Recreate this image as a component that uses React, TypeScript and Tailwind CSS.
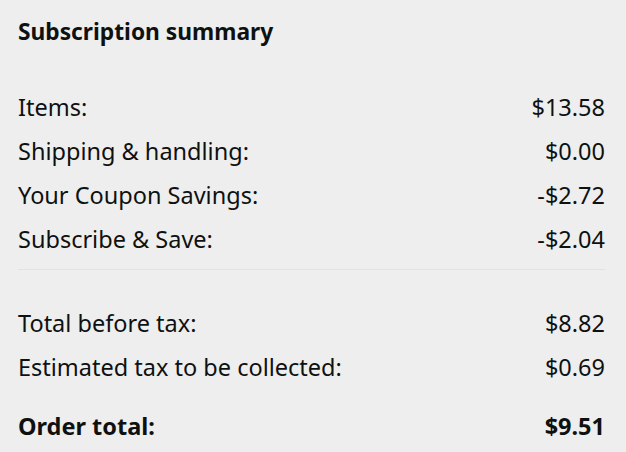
import React from "react";

interface Line {
  label: string;
  amount: string;
}

const items: Line[] = [
  { label: "Items:", amount: "$13.58" },
  { label: "Shipping & handling:", amount: "$0.00" },
  { label: "Your Coupon Savings:", amount: "-$2.72" },
  { label: "Subscribe & Save:", amount: "-$2.04" },
];

const totals: Line[] = [
  { label: "Total before tax:", amount: "$8.82" },
  { label: "Estimated tax to be collected:", amount: "$0.69" },
];

const Row = ({ label, amount }: Line) => (
  <div className="flex justify-between items-center h-[44px]">
    <span>{label}</span>
    <span>{amount}</span>
  </div>
);

const App = () => {
  return (
    <div
      className="w-[626px] h-[452px] bg-[#eeeeee] text-[#0f1111] text-[23.5px] pl-[18px] pr-[21px] pt-[14px] overflow-hidden"
      style={{ fontFamily: '"Noto Sans", "Open Sans", sans-serif' }}
    >
      <h2 className="font-bold text-[22.75px] leading-[36px]">Subscription summary</h2>
      <div className="mt-[36px]">
        {items.map((line) => (
          <Row key={line.label} {...line} />
        ))}
      </div>
      <div className="border-t border-[#e2e2e2] mt-[7px] pt-[32px]">
        {totals.map((line) => (
          <Row key={line.label} {...line} />
        ))}
      </div>
      <div className="flex justify-between items-center h-[44px] mt-[15px] font-bold">
        <span>Order total:</span>
        <span>$9.51</span>
      </div>
    </div>
  );
};

export default App;
